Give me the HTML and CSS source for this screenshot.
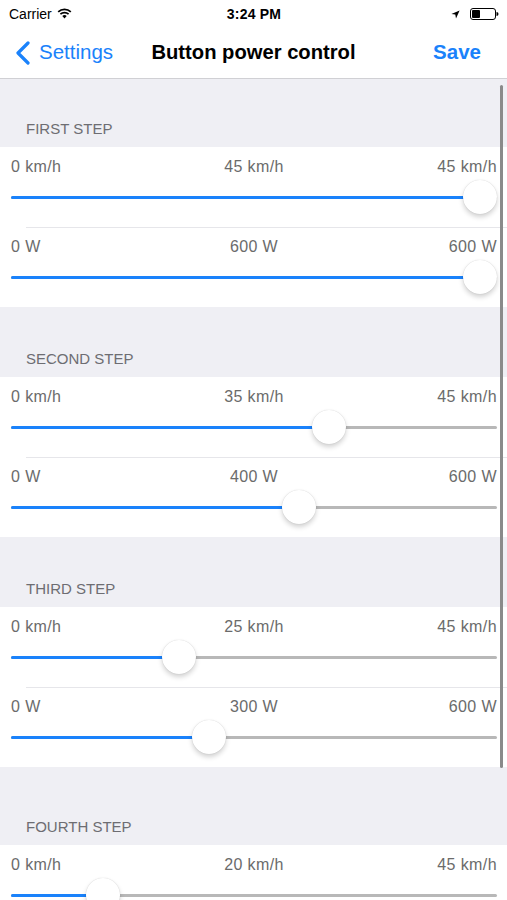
FILE: index.html
```html
<!DOCTYPE html>
<html>
<head>
<meta charset="utf-8">
<link rel="stylesheet" href="styles.css">
</head>
<body>
<div class="screen">
  <div class="statusbar">
    <div class="sb-left">Carrier
      <svg class="wifi" width="15" height="11" viewBox="0 0 15 11"><path d="M7.5 10.5 L5.3 8.1 A3.2 3.2 0 0 1 9.7 8.1 Z" fill="#000"/><path d="M3.4 6.2 A5.9 5.9 0 0 1 11.6 6.2" stroke="#000" stroke-width="1.7" fill="none"/><path d="M1.2 3.9 A9 9 0 0 1 13.8 3.9" stroke="#000" stroke-width="1.7" fill="none"/></svg>
    </div>
    <div class="sb-time">3:24 PM</div>
    <div class="sb-right">
      <svg width="9" height="9" viewBox="0 0 9 9"><path d="M8.6 0.4 L0.4 4 L4.3 4.6 L5 8.6 Z" fill="#000"/></svg>
      <svg width="29" height="12" viewBox="0 0 29 12"><rect x="0.5" y="0.5" width="25" height="11" rx="2.5" fill="none" stroke="#000" stroke-width="1"/><rect x="2" y="2" width="8" height="8" rx="1" fill="#000"/><path d="M26.5 4 A2 2 0 0 1 26.5 8 Z" fill="#000"/></svg>
    </div>
  </div>
  <div class="navbar">
    <div class="nav-back">
      <svg width="16" height="24" viewBox="0 0 16 24"><path d="M13 2 L3 12 L13 22" fill="none" stroke="#1a82fb" stroke-width="3.2" stroke-linecap="round" stroke-linejoin="round"/></svg>
      <span>Settings</span>
    </div>
    <div class="nav-title">Button power control</div>
    <div class="nav-save">Save</div>
  </div>

  <div class="content">
    <div class="section">
      <div class="sec-header">FIRST STEP</div>
      <div class="group">
        <div class="cell">
          <div class="labels"><span>0 km/h</span><span class="mid">45 km/h</span><span class="end">45 km/h</span></div>
          <div class="slider" style="--p:1"><div class="track"><div class="fill"></div></div><div class="thumb"></div></div>
        </div>
        <div class="cell">
          <div class="labels"><span>0 W</span><span class="mid">600 W</span><span class="end">600 W</span></div>
          <div class="slider" style="--p:1"><div class="track"><div class="fill"></div></div><div class="thumb"></div></div>
        </div>
      </div>
    </div>

    <div class="section">
      <div class="sec-header">SECOND STEP</div>
      <div class="group">
        <div class="cell">
          <div class="labels"><span>0 km/h</span><span class="mid">35 km/h</span><span class="end">45 km/h</span></div>
          <div class="slider" style="--p:0.667"><div class="track"><div class="fill"></div></div><div class="thumb"></div></div>
        </div>
        <div class="cell">
          <div class="labels"><span>0 W</span><span class="mid">400 W</span><span class="end">600 W</span></div>
          <div class="slider" style="--p:0.6"><div class="track"><div class="fill"></div></div><div class="thumb"></div></div>
        </div>
      </div>
    </div>

    <div class="section">
      <div class="sec-header">THIRD STEP</div>
      <div class="group">
        <div class="cell">
          <div class="labels"><span>0 km/h</span><span class="mid">25 km/h</span><span class="end">45 km/h</span></div>
          <div class="slider" style="--p:0.333"><div class="track"><div class="fill"></div></div><div class="thumb"></div></div>
        </div>
        <div class="cell">
          <div class="labels"><span>0 W</span><span class="mid">300 W</span><span class="end">600 W</span></div>
          <div class="slider" style="--p:0.4"><div class="track"><div class="fill"></div></div><div class="thumb"></div></div>
        </div>
      </div>
    </div>

    <div class="section section-last">
      <div class="sec-header">FOURTH STEP</div>
      <div class="group">
        <div class="cell">
          <div class="labels"><span>0 km/h</span><span class="mid">20 km/h</span><span class="end">45 km/h</span></div>
          <div class="slider" style="--p:0.167"><div class="track"><div class="fill"></div></div><div class="thumb"></div></div>
        </div>
      </div>
    </div>
    <div class="scroll-ind"></div>
  </div>
</div>
</body>
</html>
```

FILE: styles.css
```css
* { box-sizing: border-box; }
html, body { margin: 0; padding: 0; }
body {
  width: 507px;
  height: 900px;
  overflow: hidden;
  background: #efeff4;
  font-family: "Liberation Sans", Arial, sans-serif;
}
.screen { width: 507px; height: 900px; overflow: hidden; position: relative; }

.statusbar {
  height: 28px;
  background: #fff;
  display: grid;
  grid-template-columns: 1fr auto 1fr;
  align-items: center;
  padding: 0 8px 0 9px;
  font-size: 14px;
  color: #000;
}
.sb-left { display: flex; align-items: center; gap: 5px; }
.wifi { margin-top: -2px; }
.sb-time { font-weight: bold; letter-spacing: 0.2px; }
.sb-right { display: flex; justify-content: flex-end; align-items: center; gap: 10px; }

.navbar {
  height: 51px;
  background: #fff;
  border-bottom: 1px solid #d0d0d4;
  display: grid;
  grid-template-columns: 1fr auto 1fr;
  align-items: center;
  padding: 0 15px 2px 15px;
}
.nav-back { display: flex; align-items: center; gap: 8px; color: #1a82fb; font-size: 20.5px; }
.nav-back svg { margin-top: 1px; }
.nav-title { font-weight: bold; font-size: 20.2px; color: #000; }
.nav-save { justify-self: end; margin-right: 11px; color: #1a82fb; font-size: 20.5px; font-weight: bold; }

.content { position: relative; }
.section { padding-top: 36px; }
.section:first-child { padding-top: 34px; }
.section-last { padding-top: 44px; }
.sec-header {
  padding-left: 26px;
  font-size: 15px;
  color: #6d6d72;
  height: 34px;
  line-height: 32px;
}
.group { background: #fff; }
.cell {
  height: 80px;
  padding: 11px 10px 0 11px;
  position: relative;
}
.cell + .cell::before {
  content: "";
  position: absolute;
  top: 0; left: 26px; right: 0;
  height: 1px;
  background: #e6e6ea;
}
.labels {
  display: grid;
  grid-template-columns: 1fr auto 1fr;
  font-size: 16px;
  color: #6b6b6b;
  letter-spacing: 0.4px;
  line-height: 18px;
}
.labels .mid { text-align: center; }
.labels .end { text-align: right; }
.slider {
  position: relative;
  height: 34px;
  margin-top: 4px;
  display: flex;
  align-items: center;
}
.track {
  width: 100%;
  height: 3px;
  border-radius: 2px;
  background: #b8b8b8;
  position: relative;
  overflow: hidden;
}
.fill {
  height: 100%;
  width: calc(17px + (100% - 34px) * var(--p));
  background: #1a82fb;
}
.thumb {
  position: absolute;
  top: 0;
  left: calc((100% - 34px) * var(--p));
  width: 34px;
  height: 34px;
  border-radius: 50%;
  background: #fff;
  box-shadow: 0 3px 5px rgba(0,0,0,0.18), 0 0 1px rgba(0,0,0,0.2);
}
.scroll-ind {
  position: absolute;
  top: 6px;
  left: 500px;
  width: 3px;
  height: 683px;
  border-radius: 2px;
  background: #8a8a8a;
}
```
